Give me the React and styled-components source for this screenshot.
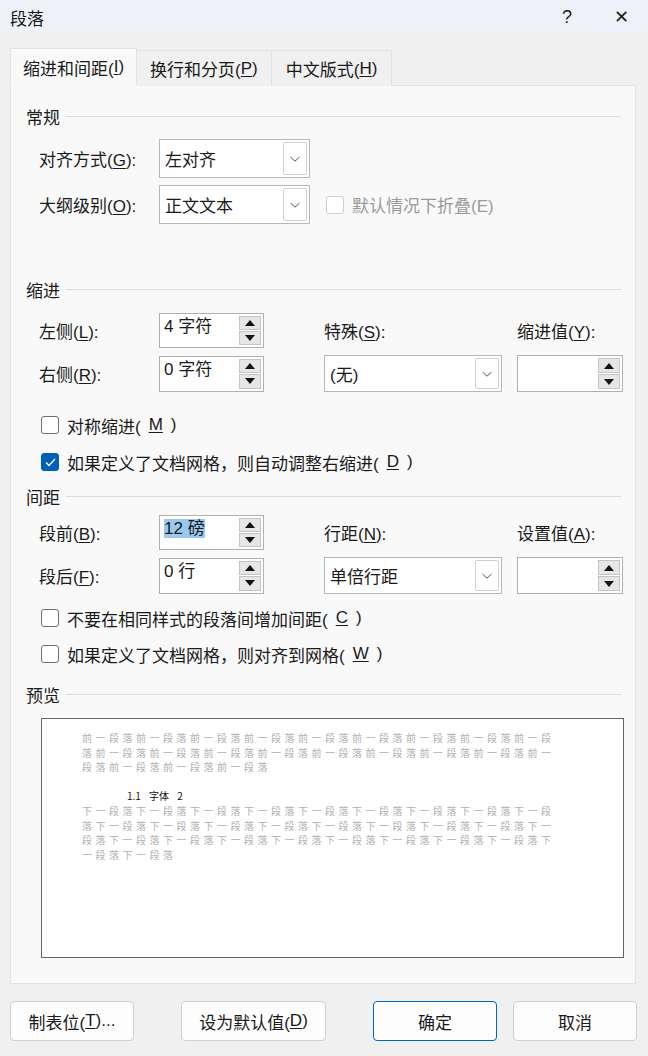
import React from 'react';
import styled, { createGlobalStyle } from 'styled-components';

const Global = createGlobalStyle`
  html, body { margin: 0; padding: 0; }
  body {
    width: 648px; height: 1056px; overflow: hidden;
    background: #f0f0f0;
    font-family: "Liberation Sans", "Noto Sans CJK SC", sans-serif;
    color: #1a1a1a;
  }
`;

const Dialog = styled.div`
  width: 648px;
  height: 1056px;
  display: flex;
  flex-direction: column;
  background: #f0f0f0;
`;

const TitleBar = styled.div`
  height: 34px;
  display: flex;
  align-items: center;
  background: #eef2f8;
  padding-left: 10px;
  font-size: 17px;
  .t { flex: 1; }
  .b { width: 54px; text-align: center; font-size: 18px; color: #222; }
`;

const Tabs = styled.div`
  display: flex;
  align-items: flex-end;
  margin: 14px 0 0 10px;
  height: 38px;
`;

const Tab = styled.div`
  height: ${p => (p.$active ? '38px' : '36px')};
  padding: 0 ${p => p.$pad}px;
  display: flex;
  align-items: center;
  font-size: 17px;
  background: ${p => (p.$active ? '#f9f9f9' : '#f0f0f0')};
  border: 1px solid #e3e3e3;
  border-bottom: ${p => (p.$active ? '1px solid #f9f9f9' : 'none')};
  margin-left: ${p => (p.$active ? '0' : '-1px')};
  position: relative;
  z-index: ${p => (p.$active ? 2 : 1)};
  box-sizing: border-box;
`;

const Panel = styled.div`
  margin: -1px 12px 0 10px;
  height: 899px;
  box-sizing: border-box;
  background: #f9f9f9;
  border: 1px solid #e3e3e3;
  padding: 19px 14px 0 15px;
  display: flex;
  flex-direction: column;
`;

const Heading = styled.div`
  display: flex;
  align-items: center;
  gap: 6px;
  height: 22px;
  font-size: 17px;
  margin-top: ${p => p.$mt || 0}px;
  &::after { content: ''; flex: 1; height: 1px; background: #dcdcdc; }
`;

const Grid = styled.div`
  display: grid;
  grid-template-columns: 120px 105px 60px 193px 106px;
  row-gap: 7px;
  margin: ${p => p.$mt}px 0 0 13px;
  align-items: center;
  font-size: 17px;
`;

const Label = styled.div`
  grid-column: ${p => p.$col || 'auto'};
  white-space: nowrap;
`;

const U = styled.span`text-decoration: underline; text-underline-offset: 2px;`;

const Combo = styled.div`
  width: ${p => p.$w}px;
  height: ${p => p.$h}px;
  box-sizing: border-box;
  background: #fff;
  border: 1px solid #b8b8b8;
  display: flex;
  align-items: center;
  padding-left: 5px;
  font-size: 17px;
  .v { flex: 1; }
  .dd {
    width: 24px; height: calc(100% - 4px); margin-right: 2px;
    border: 1px solid #d0d0d0; border-radius: 2px; box-sizing: border-box;
    display: flex; align-items: center; justify-content: center;
  }
`;

const Cell = styled.div`
  grid-column: ${p => p.$col};
  display: flex;
  align-items: center;
`;

const Spin = styled.div`
  width: ${p => p.$w}px;
  height: ${p => p.$h}px;
  box-sizing: border-box;
  background: #fff;
  border: 1px solid #b0b0b0;
  display: flex;
  padding: 2px;
  font-size: 17px;
  .v { flex: 1; padding-left: 2px; line-height: 22px; align-self: flex-start; }
  .sel { background: #99c9ef; }
  .btns { display: flex; flex-direction: column; gap: 1px; width: 22px; }
  .btn {
    flex: 1; background: #e6e6e6; border: 1px solid #c4c4c4; box-sizing: border-box;
    display: flex; align-items: center; justify-content: center;
  }
`;

const Check = styled.div`
  display: flex;
  align-items: center;
  gap: 8px;
  font-size: 17px;
  height: 22px;
  margin: ${p => p.$mt}px 0 0 ${p => p.$ml ?? 15}px;
  color: ${p => (p.$disabled ? '#9a9a9a' : '#1a1a1a')};
  .box {
    width: 18px; height: 18px; box-sizing: border-box; border-radius: 3px;
    border: 1px solid ${p => (p.$checked ? '#005fb8' : p.$disabled ? '#cfcfcf' : '#707070')};
    background: ${p => (p.$checked ? '#005fb8' : '#fff')};
    display: flex; align-items: center; justify-content: center;
  }
`;

const Preview = styled.div`
  margin: 13px 0 0 15px;
  width: 583px;
  height: 240px;
  box-sizing: border-box;
  border: 1px solid #666;
  background: #fff;
  padding: 12px 0 0 40px;
  font-family: "Noto Sans CJK SC", sans-serif;
  font-size: 10px;
  line-height: 14.5px;
  letter-spacing: 3.5px;
  color: #b0b0b0;
  .h { color: #111; letter-spacing: 0; margin: 14px 0 1px 45px; word-spacing: 6px; }
  div { white-space: nowrap; }
`;

const Footer = styled.div`
  display: flex;
  padding: 17px 0 0 10px;
`;

const Button = styled.div`
  width: ${p => p.$w}px;
  height: 40px;
  margin-left: ${p => p.$ml}px;
  box-sizing: border-box;
  background: #fdfdfd;
  border: 1px solid ${p => (p.$primary ? '#0067c0' : '#d0d0d0')};
  border-radius: 4px;
  display: flex;
  align-items: center;
  justify-content: center;
  font-size: 17px;
`;

const Chevron = () => (
  <svg width="12" height="8" viewBox="0 0 12 8"><path d="M1.5 2 L6 6.2 L10.5 2" fill="none" stroke="#555" strokeWidth="1" /></svg>
);
const Tri = ({ up }) => (
  <svg width="10" height="6" viewBox="0 0 10 6"><path d={up ? 'M5 0 L10 6 L0 6Z' : 'M0 0 L10 0 L5 6Z'} fill="#111" /></svg>
);

const Spinner = ({ value, sel, w = 105, h = 35 }) => (
  <Spin $w={w} $h={h}>
    <span className="v">{sel ? <span className="sel">{value}</span> : value}</span>
    <div className="btns">
      <div className="btn"><Tri up /></div>
      <div className="btn"><Tri /></div>
    </div>
  </Spin>
);

const DropBox = ({ value, w, h }) => (
  <Combo $w={w} $h={h}>
    <span className="v">{value}</span>
    <span className="dd"><Chevron /></span>
  </Combo>
);

const prev = '前一段落'.repeat(21);
const next = '下一段落'.repeat(28);
const lines = (s) => [s.slice(0, 35), s.slice(35, 70), s.slice(70, 105), s.slice(105)].filter(Boolean);

export default function App() {
  return (
    <Dialog>
      <Global />
      <TitleBar>
        <span className="t">段落</span>
        <span className="b">?</span>
        <span className="b">✕</span>
      </TitleBar>
      <Tabs>
        <Tab $active $pad={12}>缩进和间距(<U>I</U>)</Tab>
        <Tab $pad={13}>换行和分页(<U>P</U>)</Tab>
        <Tab $pad={14}>中文版式(<U>H</U>)</Tab>
      </Tabs>
      <Panel>
        <Heading>常规</Heading>
        <Grid $mt={12}>
          <Label>对齐方式(<U>G</U>):</Label>
          <Cell $col="2 / span 4"><DropBox value="左对齐" w={151} h={39} /></Cell>
          <Label>大纲级别(<U>O</U>):</Label>
          <Cell $col="2 / span 4">
            <DropBox value="正文文本" w={151} h={39} />
            <Check $disabled $mt={0} $ml={16}><span className="box" />默认情况下折叠(E)</Check>
          </Cell>
        </Grid>

        <Heading $mt={54}>缩进</Heading>
        <Grid $mt={13}>
          <Label>左侧(<U>L</U>):</Label>
          <Cell $col="2"><Spinner value="4 字符" /></Cell>
          <Label $col="4">特殊(<U>S</U>):</Label>
          <Label>缩进值(<U>Y</U>):</Label>
          <Label>右侧(<U>R</U>):</Label>
          <Cell $col="2"><Spinner value="0 字符" h={36} /></Cell>
          <Cell $col="4"><DropBox value="(无)" w={178} h={37} /></Cell>
          <Cell $col="5"><Spinner value="" w={106} h={37} /></Cell>
        </Grid>
        <Check $mt={22}><span className="box" />对称缩进(<U>M</U>)</Check>
        <Check $mt={15} $checked>
          <span className="box"><svg width="11" height="9" viewBox="0 0 11 9"><path d="M1 4.5 L4 7.5 L10 1" fill="none" stroke="#fff" strokeWidth="1.3" /></svg></span>
          如果定义了文档网格，则自动调整右缩进(<U>D</U>)
        </Check>

        <Heading $mt={12}>间距</Heading>
        <Grid $mt={8}>
          <Label>段前(<U>B</U>):</Label>
          <Cell $col="2"><Spinner value="12 磅" sel /></Cell>
          <Label $col="4">行距(<U>N</U>):</Label>
          <Label>设置值(<U>A</U>):</Label>
          <Label>段后(<U>F</U>):</Label>
          <Cell $col="2"><Spinner value="0 行" h={36} /></Cell>
          <Cell $col="4"><DropBox value="单倍行距" w={178} h={37} /></Cell>
          <Cell $col="5"><Spinner value="" w={106} h={37} /></Cell>
        </Grid>
        <Check $mt={13}><span className="box" />不要在相同样式的段落间增加间距(<U>C</U>)</Check>
        <Check $mt={14}><span className="box" />如果定义了文档网格，则对齐到网格(<U>W</U>)</Check>

        <Heading $mt={18}>预览</Heading>
        <Preview>
          {lines(prev).map((l, i) => <div key={i}>{l}</div>)}
          <div className="h">1.1 字体 2</div>
          {lines(next.slice(0, 112)).map((l, i) => <div key={'n' + i}>{l}</div>)}
        </Preview>
      </Panel>
      <Footer>
        <Button $w={124} $ml={0}>制表位(<U>T</U>)...</Button>
        <Button $w={145} $ml={47}>设为默认值(<U>D</U>)</Button>
        <Button $w={124} $ml={47} $primary>确定</Button>
        <Button $w={124} $ml={16}>取消</Button>
      </Footer>
    </Dialog>
  );
}
